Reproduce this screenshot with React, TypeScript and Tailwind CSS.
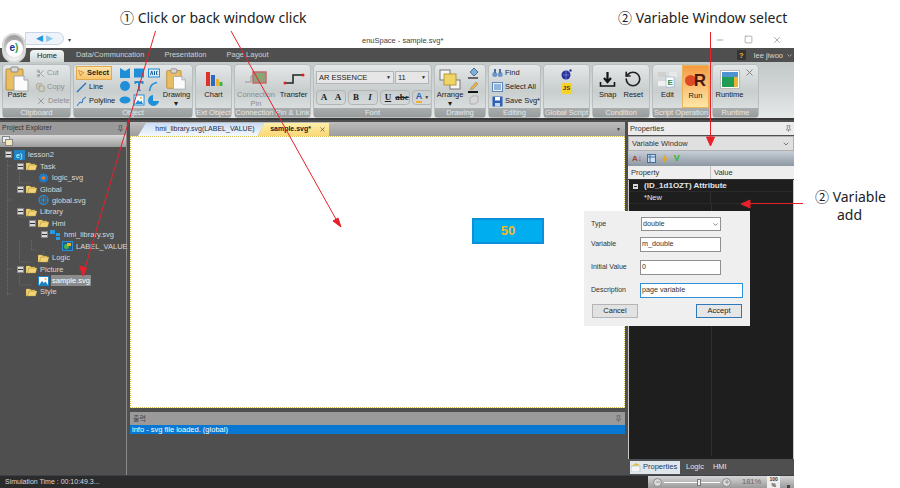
import { ChevronDown, Copy, Minus, MousePointer2, Pin, Plus, RotateCcw, Scissors, Square, X } from 'lucide-react';
import type { ReactNode } from 'react';

const font = 'font-["Liberation_Sans",sans-serif]';

function PasteIcon({ size = 26 }: { size?: number }) {
  return (
    <svg width={size} height={size} viewBox="0 0 26 26">
      <rect x="2" y="3" width="17" height="21" rx="1" fill="#e9bd62" stroke="#b98d3a" />
      <rect x="7" y="1" width="7" height="5" rx="1" fill="#d8d8d8" stroke="#8b8b8b" />
      <path d="M10 10h10l4 4v11H10z" fill="#fbfbfb" stroke="#a5a5a5" />
      <path d="M20 10v4h4" fill="#d9e2ea" stroke="#a5a5a5" />
    </svg>
  );
}

function Glyph({ kind }: { kind: string }) {
  const blue = '#1f8fd8';
  return (
    <svg width="12" height="12" viewBox="0 0 12 12">
      {kind === 'notch' && <path d="M1 1l5 3 5-3v10H1z" fill={blue} />}
      {kind === 'rect' && <rect x="1" y="1.5" width="10" height="9" fill={blue} />}
      {kind === 'abc' && (
        <g>
          <rect x="0.5" y="2" width="11" height="8" fill="#d6eaf8" stroke={blue} />
          <path d="M2.5 8l1.2-4 1.2 4M6.5 4v4M9.5 4.5h-1v3h1" stroke="#1b5f99" fill="none" />
        </g>
      )}
      {kind === 'circle' && <circle cx="6" cy="6" r="5" fill={blue} />}
      {kind === 'text' && <path d="M1.5 1h9v3h-1.5l-.5-1H7v7l1 .5V11H4v-.5l1-.5V3H3.5L3 4H1.5z" fill={blue} />}
      {kind === 'arc' && <path d="M1.5 11C2 6 5 3 9 2.5" stroke={blue} strokeWidth="1.6" fill="none" />}
      {kind === 'ellipse' && <ellipse cx="6" cy="6" rx="5.5" ry="3.5" fill={blue} />}
      {kind === 'image' && (
        <g>
          <rect x="1" y="1" width="10" height="10" fill="#fff" stroke={blue} />
          <path d="M2 10l3-4 2 2 1.5-1.5L10 10z" fill={blue} />
          <circle cx="8" cy="3.8" r="1.1" fill="#efb73e" />
        </g>
      )}
      {kind === 'pie' && <path d="M5 1v6h6a5.5 5.5 0 1 1-6-6z" fill={blue} />}
    </svg>
  );
}

function Group({ label, width, children }: { label: string; width: string; children: ReactNode }) {
  return (
    <div className={`${width} flex h-[54px] shrink-0 flex-col rounded-sm border border-[#b8bdbd] bg-gradient-to-b from-[#e4e7e7] via-[#c8cdce] to-[#e2e6e6]`}>
      <div className="flex min-h-0 flex-1 overflow-hidden">{children}</div>
      <div className="h-[9px] truncate bg-gradient-to-b from-[#a9adad] to-[#989c9c] text-center text-[7.5px] leading-[9px] text-[#e8e8e8]">{label}</div>
    </div>
  );
}

function Big({ icon, label, sub, muted, active }: { icon: ReactNode; label: string; sub?: string; muted?: boolean; active?: boolean }) {
  return (
    <div className={`flex flex-col items-center pt-[3px] text-[7.5px] leading-[9px] ${muted ? 'text-[#8c8c8c]' : 'text-[#1c1c1c]'} ${active ? 'h-full border border-[#e8b45a] bg-gradient-to-b from-[#f59a3f] to-[#fde6a6]' : ''}`}>
      <div className="flex h-[22px] items-center justify-center">{icon}</div>
      <div className="whitespace-nowrap">{label}</div>
      {sub && <div className="whitespace-nowrap">{sub}</div>}
    </div>
  );
}

function Small({ icon, label, muted, className = '' }: { icon: ReactNode; label: string; muted?: boolean; className?: string }) {
  return (
    <div className={`flex h-[14px] items-center gap-[2px] whitespace-nowrap text-[7.5px] ${muted ? 'text-[#8f8f8f]' : 'text-[#1c1c1c]'} ${className}`}>
      {icon}
      <span>{label}</span>
    </div>
  );
}

function FontBtn({ children, className = '' }: { children: ReactNode; className?: string }) {
  return <div className={`flex h-[13px] w-[14px] items-center justify-center font-["Liberation_Serif",serif] text-[9px] font-bold text-[#222] ${className}`}>{children}</div>;
}

function Ribbon() {
  const shapes = ['notch', 'rect', 'abc', 'circle', 'text', 'arc', 'ellipse', 'image', 'pie'];
  return (
    <div className="flex h-[58px] gap-[2px] border-b-2 border-[#3a3a3a] bg-gradient-to-b from-[#c3c8c9] via-[#d2d6d6] to-[#e5e9e9] pl-[2px] pt-[2px]">
      <Group label="Clipboard" width="w-[69px]">
        <div className="flex w-[28px] justify-center"><Big icon={<PasteIcon />} label="Paste" /></div>
        <div className="flex flex-col pl-[5px] pt-[1px]">
          <Small muted label="Cut" icon={<Scissors size={9} className="text-[#8d8d8d]" />} />
          <Small muted label="Copy" icon={<Copy size={9} className="text-[#a39468]" />} />
          <Small muted label="Delete" icon={<X size={10} className="text-[#8d8d8d]" />} />
        </div>
      </Group>
      <Group label="Object" width="w-[120px]">
        <div className="flex w-[44px] flex-col pl-[2px] pt-[1px]">
          <Small label="Select" className="w-[36px] border border-[#e0a84f] bg-gradient-to-b from-[#fce3a8] to-[#f9c46d] font-bold" icon={<MousePointer2 size={8} className="text-[#b7791f]" />} />
          <Small label="Line" icon={<svg width="11" height="11" viewBox="0 0 11 11"><path d="M1 10L10 1" stroke="#1f6fc0" strokeWidth="1.2" /></svg>} />
          <Small label="Polyline" icon={<svg width="11" height="11" viewBox="0 0 11 11"><path d="M1 10l3-4 2 1 1-4 3-2" stroke="#1f6fc0" fill="none" /></svg>} />
        </div>
        <div className="grid w-[43px] grid-cols-3 grid-rows-3 place-items-center py-[1px]">
          {shapes.map((s) => <Glyph key={s} kind={s} />)}
        </div>
        <div className="flex flex-1 justify-center"><Big icon={<PasteIcon size={22} />} label="Drawing" sub="▾" /></div>
      </Group>
      <Group label="Ext Object" width="w-[37px]">
        <div className="flex flex-1 justify-center">
          <Big label="Chart" icon={
            <svg width="20" height="20" viewBox="0 0 20 20">
              <rect x="2" y="3" width="4" height="14" fill="#d9332b" />
              <rect x="7" y="6" width="4" height="11" fill="#2f68c4" />
              <rect x="12" y="10" width="3" height="7" fill="#e9b52f" />
              <rect x="15.500" y="13" width="3" height="4" fill="#3fb24a" />
            </svg>
          } />
        </div>
      </Group>
      <Group label="Connection Pin & Link" width="w-[77px]">
        <div className="flex w-[42px] justify-center">
          <Big muted label="Connection" sub="Pin" icon={
            <svg width="22" height="18" viewBox="0 0 22 18">
              <path d="M0 12h6V6h4" stroke="#999" fill="none" />
              <rect x="8" y="2" width="13" height="11" fill="#8f9f80" stroke="#c36b6b" strokeWidth="1.5" />
              <rect x="12" y="5" width="5" height="4" fill="#7fb05c" />
            </svg>
          } />
        </div>
        <div className="flex flex-1 justify-center">
          <Big label="Transfer" icon={
            <svg width="22" height="14" viewBox="0 0 22 14">
              <path d="M1 11h9V3h11" stroke="#222" strokeWidth="1.5" fill="none" />
              <circle cx="2" cy="11" r="1.500" fill="#e02020" />
              <circle cx="20" cy="3" r="1.500" fill="#e02020" />
            </svg>
          } />
        </div>
      </Group>
      <Group label="Font" width="w-[119px]">
        <div className="flex flex-1 flex-col gap-[6px] px-[2px] pt-[6px]">
          <div className="flex gap-[1px]">
            <div className="flex h-[13px] w-[78px] items-center justify-between border border-[#b5b5b5] bg-[#e6e6e6] px-[2px] text-[7.5px] text-[#222]">AR ESSENCE<span className="text-[5px]">▼</span></div>
            <div className="flex h-[13px] w-[34px] items-center justify-between border border-[#b5b5b5] bg-[#e6e6e6] px-[2px] text-[7.5px] text-[#222]">11<span className="text-[5px]">▼</span></div>
          </div>
          <div className="flex items-center gap-[2px]">
            <div className="flex rounded-sm border border-[#b5b5b5]"><FontBtn>A</FontBtn><FontBtn className="text-[7px]">A</FontBtn></div>
            <div className="flex rounded-sm border border-[#b5b5b5]"><FontBtn>B</FontBtn><FontBtn className="italic">I</FontBtn></div>
            <div className="flex rounded-sm border border-[#b5b5b5]"><FontBtn className="underline">U</FontBtn><FontBtn className="text-[6px] line-through">abc</FontBtn></div>
            <div className="flex h-[15px] w-[21px] items-center justify-center gap-[2px] rounded-sm border border-[#b5b5b5] text-[9px] font-bold text-[#2d5fb5]"><span className="border-b-2 border-[#f0b030] leading-[9px]">A</span><span className="text-[5px] text-[#333]">▼</span></div>
          </div>
        </div>
      </Group>
      <Group label="Drawing" width="w-[52px]">
        <div className="flex w-[30px] justify-center">
          <Big label="Arrange" sub="▾" icon={
            <svg width="22" height="21" viewBox="0 0 22 21">
              <rect x="1" y="1" width="10" height="10" fill="#f5f5f5" stroke="#777" />
              <rect x="11" y="11" width="10" height="9" fill="#f5f5f5" stroke="#777" />
              <rect x="5" y="5" width="12" height="11" fill="#f0d468" stroke="#b59a3a" />
            </svg>
          } />
        </div>
        <div className="flex flex-col items-center gap-[2px] pl-[2px] pt-[2px]">
          <svg width="14" height="12" viewBox="0 0 14 12"><path d="M3 5l4-4 4 4-4 4z" fill="#7fb0dc" stroke="#4a6f94" /><rect x="1" y="10" width="10" height="2" fill="#666" /></svg>
          <svg width="14" height="12" viewBox="0 0 14 12"><path d="M3 8l6-7 2 2-6 6z" fill="#efb33e" stroke="#777" strokeWidth=".5" /><rect x="1" y="10" width="10" height="2" fill="#111" /></svg>
          <svg width="12" height="10" viewBox="0 0 12 10"><path d="M2 9V3l3-2h5v6l-3 2z" fill="#d6d6d6" stroke="#b0b0b0" /></svg>
        </div>
      </Group>
      <Group label="Editing" width="w-[53px]">
        <div className="flex flex-col pl-[3px] pt-[1px]">
          <Small label="Find" icon={<svg width="11" height="10" viewBox="0 0 11 10"><circle cx="2.800" cy="6.500" r="2.500" fill="#6e95c8" /><circle cx="8.200" cy="6.500" r="2.500" fill="#6e95c8" /><rect x="2" y="1" width="2" height="4" fill="#4e6f9e" /><rect x="7" y="1" width="2" height="4" fill="#4e6f9e" /></svg>} />
          <Small label="Select All" icon={<svg width="11" height="10" viewBox="0 0 11 10"><rect x=".5" y=".5" width="10" height="9" fill="#e8f1fa" stroke="#5c87bc" /><path d="M2 3h7M2 5h7M2 7h7" stroke="#3c78c0" /></svg>} />
          <Small label="Save Svg*" icon={<svg width="11" height="11" viewBox="0 0 11 11"><rect x=".5" y=".5" width="10" height="10" fill="#2d5fb5" /><rect x="3" y="1" width="5" height="3.500" fill="#fff" /><rect x="3" y="7" width="5" height="3.500" fill="#c8d6ec" /></svg>} />
        </div>
      </Group>
      <Group label="Global Script" width="w-[47px]">
        <div className="flex flex-1 flex-col items-center gap-[3px] pt-[4px]">
          <svg width="11" height="11" viewBox="0 0 11 11"><circle cx="5" cy="6" r="4.500" fill="#28309c" /><path d="M2 6h6M5 2v8" stroke="#8b90d8" strokeWidth=".7" /><circle cx="9.500" cy="1.500" r="1.200" fill="#28309c" /></svg>
          <div className="flex h-[11px] w-[10px] items-center justify-center bg-[#f5d327] text-[6px] font-bold text-[#333]">JS</div>
        </div>
      </Group>
      <Group label="Condition" width="w-[58px]">
        <div className="flex flex-1 justify-center gap-[7px]">
          <Big label="Snap" icon={
            <svg width="17" height="17" viewBox="0 0 17 17">
              <path d="M8.500 1v9M5 7l3.500 4L12 7" stroke="#151515" strokeWidth="2.200" fill="none" />
              <path d="M1.500 11v4h14v-4" stroke="#151515" strokeWidth="1.600" fill="none" />
            </svg>
          } />
          <Big label="Reset" icon={<RotateCcw size={18} strokeWidth={2.2} className="text-[#222]" />} />
        </div>
      </Group>
      <Group label="Script Operation" width="w-[58px]">
        <div className="flex w-[29px] justify-center">
          <Big label="Edit" icon={
            <svg width="20" height="17" viewBox="0 0 20 17">
              <rect x="0" y="1" width="8" height="5" fill="#d0d0d0" />
              <rect x="11" y="1" width="8" height="5" fill="#e8e8e8" />
              <rect x="0" y="10" width="8" height="5" fill="#f0f0f0" />
              <rect x="8" y="6" width="8" height="10" fill="#fff" stroke="#6fa0c8" strokeWidth=".5" />
              <text x="9.500" y="14" fontSize="8" fontWeight="700" fill="#2a8a5a">E</text>
            </svg>
          } />
        </div>
        <div className="flex-1">
          <Big active label="Run" icon={
            <div className="flex items-center">
              <div className="h-[11px] w-[11px] rounded-full bg-[#dc4a25]" />
              <span className="-ml-[2px] text-[17px] font-bold leading-none text-[#4a1a12]">R</span>
            </div>
          } />
        </div>
      </Group>
      <Group label="Runtime" width="w-[47px]">
        <div className="relative flex-1 pl-[2px]">
          <div className="w-[29px]">
            <Big label="Runtime" icon={
              <svg width="20" height="19" viewBox="0 0 20 19">
                <rect x=".5" y=".5" width="19" height="18" fill="#fff" stroke="#bbb" />
                <rect x="2" y="2" width="16" height="5" fill="#4f93d0" />
                <rect x="2" y="7" width="12" height="10" fill="#1f9d55" />
                <rect x="14" y="7" width="4" height="10" fill="#e9b52f" />
              </svg>
            } />
          </div>
          <X size={11} className="absolute right-[3px] top-[2px] text-[#7d7d7d]" />
        </div>
      </Group>
      <div className="flex-1" />
    </div>
  );
}

const tree = [
  { depth: 0, label: 'lesson2', icon: 'project', open: true },
  { depth: 1, label: 'Task', icon: 'folder', open: true },
  { depth: 2, label: 'logic_svg', icon: 'gear' },
  { depth: 1, label: 'Global', icon: 'folder', open: true },
  { depth: 2, label: 'global.svg', icon: 'globe' },
  { depth: 1, label: 'Library', icon: 'folder', open: true },
  { depth: 2, label: 'Hmi', icon: 'folder', open: true },
  { depth: 3, label: 'hmi_library.svg', icon: 'lib', open: true },
  { depth: 4, label: 'LABEL_VALUE', icon: 'label' },
  { depth: 2, label: 'Logic', icon: 'folder' },
  { depth: 1, label: 'Picture', icon: 'folder', open: true },
  { depth: 2, label: 'sample.svg', icon: 'pic', selected: true },
  { depth: 1, label: 'Style', icon: 'folder' },
];

function TreeIcon({ kind }: { kind: string }) {
  return (
    <svg width="11" height="10" viewBox="0 0 11 10" className="shrink-0">
      {kind === 'folder' && <path d="M0 2h4l1 1h4v1H3L1.500 9H0zM3 4h8L9.500 9H1.500z" fill="#f2d477" stroke="#b8983e" strokeWidth=".4" />}
      {kind === 'project' && <g><rect width="11" height="10" fill="#1f83c4" /><text x="2" y="8" fontSize="7" fill="#dff">e)</text></g>}
      {kind === 'gear' && <g><circle cx="5.500" cy="5" r="4" fill="#1d7fd0" stroke="#1d7fd0" strokeDasharray="1.500 1" strokeWidth="1.500" /><circle cx="5.500" cy="5" r="1.800" fill="#f07a20" /></g>}
      {kind === 'globe' && <g><circle cx="5.500" cy="5" r="4.500" fill="none" stroke="#2a8fd6" strokeWidth="1.200" /><path d="M1 5h9M5.500 1v8M2.500 2l6 6M8.500 2l-6 6" stroke="#2a8fd6" strokeWidth=".8" /></g>}
      {kind === 'lib' && <g><rect x="0" y="0" width="5" height="4" fill="#2a9be0" /><rect x="6" y="3" width="4" height="3" fill="#2a9be0" /><rect x="6" y="7" width="4" height="3" fill="#2a9be0" /></g>}
      {kind === 'label' && <g><rect x=".5" y=".5" width="10" height="9" fill="#1d5e8e" stroke="#2a8fd6" /><circle cx="4.500" cy="5.500" r="2.500" fill="#45b649" /><rect x="5" y="2" width="4" height="3" fill="#f0b030" /></g>}
      {kind === 'pic' && <g><rect x=".5" y=".5" width="10" height="9" fill="#fff" stroke="#1f83c4" /><path d="M1 9l3-4 2 2 1.500-1.500L10 9z" fill="#1f83c4" /><circle cx="7.500" cy="3" r="1" fill="#efb73e" /></g>}
    </svg>
  );
}

function ProjectExplorer() {
  return (
    <div className="flex w-[127px] shrink-0 flex-col border-r border-[#8b8b8b] pb-[1px]">
      <div className="flex h-[13px] items-center justify-between bg-[#9a9a9a] px-[2px] text-[7px] text-[#333]">
        Project Explorer
        <Pin size={7} className="text-[#444]" />
      </div>
      <div className="flex h-[12px] items-center bg-gradient-to-b from-[#d8d8d8] to-[#9c9c9c] px-[2px]">
        <svg width="11" height="10" viewBox="0 0 11 10"><rect x=".5" y=".5" width="7" height="6" fill="#e8eef4" stroke="#888" /><rect x="3.500" y="3.500" width="7" height="6" fill="#f4e8b8" stroke="#888" /></svg>
      </div>
      <div className="relative flex-1 pt-[2px]">
        <svg className="absolute left-0 top-0" width="60" height="170" fill="none" stroke="#6c6c6c" strokeDasharray="1 1">
          <path d="M7.500 13V149M7.500 19h5M7.500 53h5M7.500 122h5M7.500 147h5M19.500 25V36h12M19.500 59V70h12M19.500 93V115h12M31.500 93V103h6M43.500 104V115h7M19.500 127V138h12" />
        </svg>
        {tree.map((t) => (
          <div key={t.label} className="relative flex h-[11.45px] items-center" style={{ paddingLeft: 2 + t.depth * 12 }}>
            <div className="flex w-[12px] shrink-0 items-center justify-center">
              {t.open && <div className="flex h-[7px] w-[7px] items-center justify-center border border-[#888] bg-[#d8d8d8]"><div className="h-[1px] w-[5px] bg-[#333]" /></div>}
            </div>
            <TreeIcon kind={t.icon} />
            <span className={`ml-[2px] whitespace-nowrap px-[1px] text-[7.5px] leading-[11px] text-[#d9d9d9] ${t.selected ? 'bg-[#8c8c8c] text-white' : ''}`}>{t.label}</span>
          </div>
        ))}
      </div>
    </div>
  );
}

function DocTabs() {
  return (
    <div className="flex h-[14px] items-end justify-between bg-gradient-to-b from-[#bcbcbc] to-[#9d9d9d] pl-[8px]">
      <div className="flex items-end">
        <div className="flex h-[13px] w-[126px] items-center justify-center bg-gradient-to-b from-[#c9dcf5] to-[#f5f8fc] pl-[8px] text-[7px] text-[#1c2c44] [clip-path:polygon(8px_0,100%_0,calc(100%-6px)_100%,0_100%)]">hmi_library.svg(LABEL_VALUE)</div>
        <div className="-ml-[6px] flex h-[13px] w-[71px] items-center justify-end gap-[8px] bg-gradient-to-b from-[#fdf0a8] to-[#fbd776] pr-[3px] text-[7px] font-bold text-[#222] [clip-path:polygon(6px_0,100%_0,100%_100%,0_100%)]">
          sample.svg*
          <X size={7} className="text-[#333]" />
        </div>
      </div>
      <span className="mb-[3px] mr-[4px] text-[5px] text-[#333]">▼</span>
    </div>
  );
}

function Canvas() {
  return (
    <div className="flex h-[272px] items-start border border-dotted border-[#d8c55a] bg-white pl-[341px] pt-[81px]">
      <div className="flex h-[26px] w-[72px] items-center justify-center border-2 border-[#0a8fd8] bg-[#00aef0] text-[13px] font-bold text-[#f5b82e]">50</div>
    </div>
  );
}

function Output() {
  return (
    <div className="flex flex-1 flex-col pt-[4px]">
      <div className="flex h-[13px] items-center justify-between bg-[#9a9a9a] px-[3px] font-['Noto_Sans_CJK_KR',sans-serif] text-[7px] text-[#444]">
        출력
        <Pin size={7} className="text-[#555]" />
      </div>
      <div className="h-[9px] bg-[#0878d2] px-[2px] text-[7.5px] leading-[9px] text-white">info - svg file loaded. (global)</div>
    </div>
  );
}

function Properties() {
  return (
    <div className="flex w-[166px] shrink-0 flex-col">
      <div className="flex h-[13px] items-center justify-between bg-[#ececec] px-[2px] text-[7.5px] text-[#333]">
        Properties
        <Pin size={7} className="text-[#555]" />
      </div>
      <div className="mt-[1px] flex h-[15px] items-center justify-between border border-[#b0b0b0] bg-[#e0e0e0] px-[3px] text-[7.5px] text-[#333]">
        Variable Window
        <ChevronDown size={8} className="text-[#444]" />
      </div>
      <div className="flex h-[15px] items-center gap-[5px] bg-gradient-to-b from-[#c8ced6] to-[#8d98a3] px-[4px]">
        <span className="text-[8px] font-bold leading-none text-[#a3452f]">A↓</span>
        <svg width="9" height="9" viewBox="0 0 9 9"><rect x=".5" y=".5" width="8" height="8" fill="#cfe0f2" stroke="#3f6f9f" /><path d="M1 3h7M3 1v7" stroke="#3f6f9f" /></svg>
        <svg width="8" height="10" viewBox="0 0 8 10"><path d="M5 0L1 5h2.500L2 10l5-6H4.500z" fill="#e9a520" /></svg>
        <span className="text-[9px] font-bold leading-none text-[#35b820]">V</span>
      </div>
      <div className="flex h-[14px] border-b border-[#333] bg-[#eeeeee] text-[7.5px] text-[#333]">
        <div className="flex w-[83px] items-center border-r border-[#c4c4c4] px-[3px]">Property</div>
        <div className="flex flex-1 items-center px-[3px]">Value</div>
      </div>
      <div className="flex-1 border-x border-[#c8c8c8] bg-[#1e1e1e] text-[8px] text-[#e4e4e4]">
        <div className="flex h-[12px] items-center gap-[3px] border-b border-[#2a2a2a] pl-[4px] pt-[1px] font-bold">
          <div className="flex h-[5px] w-[5px] items-center justify-center bg-[#d8d8d8]"><div className="h-[1px] w-[3px] bg-[#333]" /></div>
          <span className="ml-[3px]">(ID_1d1OZT) Attribute</span>
        </div>
        <div className="flex h-[12px] border-b border-[#2a2a2a]">
          <div className="w-[82px] border-r border-[#2f2f2f] pl-[15px] text-[7.5px] leading-[12px]">*New</div>
        </div>
        <div className="ml-[82px] h-[252px] border-l border-[#2f2f2f]" />
      </div>
      <div className="flex h-[16px] items-center bg-[#4f4f4f] pl-[2px] text-[7.5px] text-[#e4e4e4]">
        <div className="flex h-[13px] w-[50px] items-center gap-[2px] bg-[#dfe6ec] px-[1px] text-[#1f3a5a]">
          <svg width="10" height="9" viewBox="0 0 10 9"><rect y="3" width="9" height="6" fill="#f5f5f5" stroke="#8aa" strokeWidth=".5" /><path d="M1 3l4-3 4 2z" fill="#e5ba2e" /></svg>
          Properties
        </div>
        <span className="ml-[6px]">Logic</span>
        <span className="ml-[9px]">HMI</span>
      </div>
    </div>
  );
}

function StatusBar() {
  return (
    <div className="flex h-[13px] border-t border-[#3c4148] bg-[#2b2b2b]">
      <div className="flex-1 pl-[5px] text-[7px] leading-[12px] text-[#d8d8d8]">Simulation Time : 00:10:49.3...</div>
      <div className="flex w-[146px] items-center bg-gradient-to-b from-[#d6d6d6] to-[#9a9a9a] pl-[5px] text-[#555]">
        <div className="flex h-[9px] w-[9px] items-center justify-center rounded-full border border-[#888] bg-[#ddd]"><Minus size={6} /></div>
        <div className="relative mx-[2px] h-[1px] w-[56px] bg-white">
          <div className="absolute -top-[3px] left-[33px] h-[7px] w-[4px] border border-[#777] bg-[#eee]" />
        </div>
        <div className="flex h-[9px] w-[9px] items-center justify-center rounded-full border border-[#888] bg-[#ddd]"><Plus size={6} /></div>
        <span className="ml-[11px] text-[7.5px] text-[#666]">181%</span>
        <div className="ml-[6px] h-[13px] w-[13px] bg-[#eee] text-center text-[5px] font-bold leading-[6px] text-[#333]">100<br />%</div>
        <div className="ml-[7px] mt-[8px] h-[3px] w-[3px] bg-[#444]" />
      </div>
    </div>
  );
}

function VariableDialog() {
  const label = 'w-[49px] text-[7px] text-[#333]';
  const input = 'flex h-[15px] items-center border border-[#8f8f8f] bg-white px-[1px] text-[7.2px] text-[#333]';
  return (
    <div className="absolute left-[584px] top-[211px] flex h-[115px] w-[166px] flex-col bg-[#efefef] pl-[7px] pt-[6px]">
      <div className="flex h-[14px] items-center">
        <span className={label}>Type</span>
        <div className={`${input} ml-[1px] !h-[14px] w-[80px] justify-between`}>double<ChevronDown size={7} /></div>
      </div>
      <div className="mt-[6px] flex items-center">
        <span className={label}>Variable</span>
        <div className={`${input} w-[81px]`}>m_double</div>
      </div>
      <div className="mt-[8px] flex items-center">
        <span className={label}>Initial Value</span>
        <div className={`${input} w-[81px]`}>0</div>
      </div>
      <div className="mt-[8px] flex items-center">
        <span className={label}>Description</span>
        <div className={`${input} w-[103px] !border-[#2f8fd8]`}>page variable</div>
      </div>
      <div className="mr-[7px] mt-[6px] flex justify-between pl-[1px] pr-[1px] text-[7.5px] text-[#222]">
        <div className="flex h-[14px] w-[46px] items-center justify-center border border-[#b5b5b5] bg-[#e2e2e2]">Cancel</div>
        <div className="flex h-[14px] w-[46px] items-center justify-center border border-[#2f78b8] bg-[#e6e6e6]">Accept</div>
      </div>
    </div>
  );
}

function Annotations() {
  const note = 'absolute whitespace-nowrap font-["Noto_Sans","Noto_Sans_CJK_KR",sans-serif] text-[14px] leading-[18px] text-[#222]';
  return (
    <>
      <svg className="absolute left-0 top-0" width="900" height="488" fill="none" stroke="#e8202a">
        <path d="M155.500 31L85 268" />
        <path d="M231 31L337 221" />
        <path d="M710.500 32V140" />
        <path d="M803 203.500H746" />
        <path d="M83 276l-3.500-10 7 2z" fill="#e8202a" />
        <path d="M341 227l-8-6 5-3z" fill="#e8202a" />
        <path d="M710.500 146l-4-9h8z" fill="#e8202a" />
        <path d="M741 204l9-4v8z" fill="#e8202a" />
      </svg>
      <div className={`${note} left-[120px] top-[9px]`}>① Click or back window click</div>
      <div className={`${note} left-[618px] top-[9px]`}>② Variable Window select</div>
      <div className={`${note} left-[815px] top-[188px]`}>② Variable<br /><span className="ml-[22px]">add</span></div>
    </>
  );
}

export default function App() {
  return (
    <div className={`relative h-[488px] w-[900px] overflow-hidden bg-white ${font}`}>
      <div className="flex h-full w-[794px] flex-col">
        {/* title bar */}
        <div className="flex h-[48px] items-end pb-[2px] pl-[25px] text-[7.5px] text-[#444]">
          <div className="mb-[1px] flex h-[13px] w-[39px] items-center justify-center gap-[3px] rounded-r-full border border-[#c9d5e4] bg-[#eef3f9]">
            <span className="text-[9px] leading-none text-[#1a9be0]">◀</span>
            <span className="text-[9px] leading-none text-[#8cc8ee]">▶</span>
          </div>
          <span className="mb-[3px] ml-[4px] text-[6px] leading-none">▾</span>
          <span className="ml-[291px] w-[90px] whitespace-nowrap">enuSpace - sample.svg*</span>
          <div className="mb-[1px] ml-[263px] flex gap-[19px] text-[#9a9a9a]">
            <Minus size={10} />
            <Square size={9} />
            <X size={10} />
          </div>
        </div>
        {/* ribbon tabs */}
        <div className="flex h-[14px] items-end bg-[#4f4f4f] pl-[30px] text-[7.5px] text-[#d0d0d0]">
          <div className="flex h-[12px] w-[34px] items-center justify-center rounded-t-sm bg-gradient-to-b from-[#f4f6f6] to-[#cfd4d4] text-[#222]">Home</div>
          <span className="mb-[2px] ml-[12px]">Data/Communcation</span>
          <span className="mb-[2px] ml-[20px]">Presentation</span>
          <span className="mb-[2px] ml-[20px]">Page Layout</span>
          <div className="mb-[1px] ml-auto flex items-center text-[#d8d8d8]">
            <span className="flex h-[10px] w-[9px] items-center justify-center bg-[#333] font-bold text-[#f2b632]">?</span>
            <span className="ml-[8px]">lee jiwoo</span>
            <ChevronDown size={7} className="ml-[3px] mr-[1px]" />
          </div>
        </div>
        <Ribbon />
        {/* work area */}
        <div className="flex min-h-0 flex-1 gap-[3px] bg-[#4f4f4f] pt-[2px]">
          <ProjectExplorer />
          <div className="flex min-w-0 flex-1 flex-col">
            <DocTabs />
            <Canvas />
            <Output />
          </div>
          <Properties />
        </div>
        <StatusBar />
      </div>
      <div className="absolute left-[2px] top-[33px] flex h-[30px] w-[24px] items-center justify-center rounded-full border-2 border-[#d8d8d8] bg-gradient-to-b from-[#9a9a9a] to-[#f5f5f5]">
        <div className="flex h-[17px] w-[17px] items-center justify-center rounded-full bg-white text-[10px] font-bold leading-none text-[#20309c]">e<span className="text-[#2aa04a]">)</span></div>
      </div>
      <VariableDialog />
      <Annotations />
    </div>
  );
}
